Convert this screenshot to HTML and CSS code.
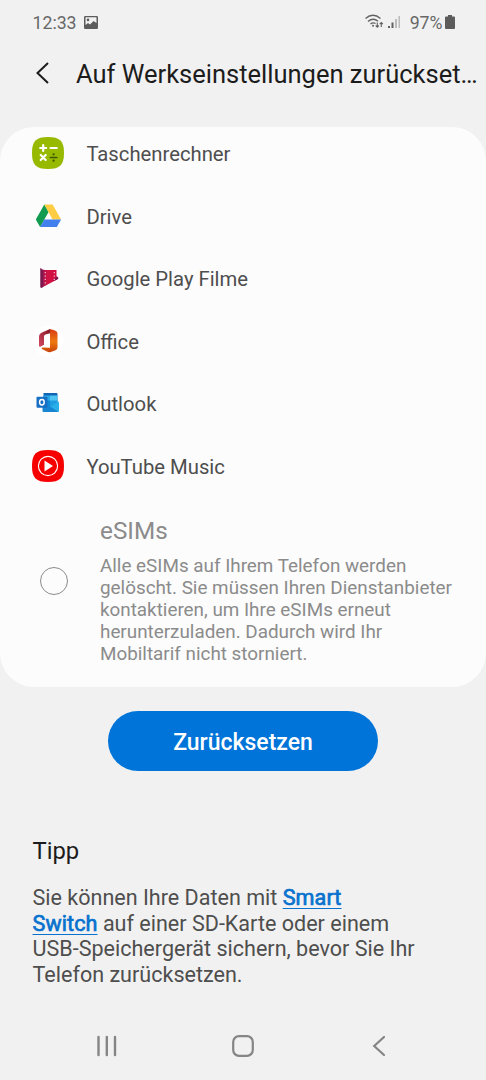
FILE: index.html
```html
<!DOCTYPE html>
<html lang="de">
<head>
<meta charset="utf-8">
<title>Auf Werkseinstellungen zurücksetzen</title>
<link rel="stylesheet" href="styles.css">
</head>
<body>
<div class="screen">
  <header class="status">
    <span class="clock">12:33</span>
    <svg class="picture" width="14" height="13" viewBox="0 0 14 13"><path fill="#5c5c5c" fill-rule="evenodd" d="M1.3 0h11.4Q14 0 14 1.3v10.4q0 1.3-1.3 1.3H1.3Q0 13 0 11.700V1.300Q0 0 1.300 0ZM1.500 1.300V9L4 7l2 1.500L9.500 5l3 2V1.300ZM4 2.600a1.300 1.300 0 1 1 0 2.600 1.300 1.300 0 0 1 0-2.600Z"/></svg>
    <svg class="wifi" width="20" height="16" viewBox="0 0 20 16" fill="none" stroke="#626262" stroke-width="1.400"><path d="M.5 4.500Q8-1.800 15.500 4.500M3 7.500Q8 3.200 13 7.200M5.500 10Q8 8 10.500 9.500"/><circle cx="8" cy="11.700" r="1" fill="#626262" stroke="none"/><path stroke-width="1.100" d="M12.300 8.500V13M10.700 11.500l1.600 1.600 1.600-1.600M16.300 13V8.800M14.700 10.200l1.600-1.600 1.600 1.600"/></svg>
    <svg class="signal" width="13" height="14" viewBox="0 0 13 14"><path fill="#626262" d="M0 11h2v2H0zM3.500 7.500h2V13h-2z"/><path fill="#bcbcbc" d="M7 4h2v9H7zM10.500 1h1.500v12h-1.500z"/></svg>
    <span class="percent">97%</span>
    <svg class="battery" width="10" height="14" viewBox="0 0 10 14"><path fill="#5c5c5c" d="M3 0h4v1.500h2q1 0 1 1V13q0 1-1 1H1q-1 0-1-1V2.500q0-1 1-1h2z"/></svg>
  </header>

  <div class="titlebar">
    <svg width="14" height="22" viewBox="0 0 14 22" fill="none" stroke="#1c1c1c" stroke-width="2"><path d="M13 1 2.500 11 13 21"/></svg>
    <h1>Auf Werkseinstellungen zurückset…</h1>
  </div>

  <main class="card">
    <ul class="apps">
      <li><svg class="icon" viewBox="0 0 32 32"><path fill="#97b900" d="M16 0C28 0 32 4 32 16S28 32 16 32 0 28 0 16 4 0 16 0Z"/><path stroke="#fff" stroke-width="2.200" stroke-linecap="round" d="M8.200 11h6M11.200 8v6M18.500 11h6.300M8.700 18l5 5M13.700 18l-5 5"/><path stroke="#3d5800" stroke-width="1.700" stroke-linecap="round" d="M18.500 20.500h6.300"/><g fill="#3d5800"><circle cx="21.600" cy="17.300" r="1.100"/><circle cx="21.600" cy="23.700" r="1.100"/></g></svg><span>Taschenrechner</span></li>
      <li><svg class="icon" viewBox="0 0 32 32"><path fill="#109b50" d="M12.300 4.500 16.600 12 8.100 27 3.800 19.500Z"/><path fill="#ffcd43" d="M12.300 4.500h8.300l8.500 15h-8.500Z"/><path fill="#4180ed" d="M12.300 19.500h16.800L24.800 27H8.100Z"/></svg><span>Drive</span></li>
      <li><svg class="icon" viewBox="0 0 32 32"><defs><linearGradient id="film"><stop offset="0" stop-color="#8d1750"/><stop offset=".4" stop-color="#d01345"/><stop offset="1" stop-color="#d3083f"/></linearGradient></defs><path fill="url(#film)" d="M8.500 6Q10 7.800 13 8h11.500v6.500q3 1 1 2.800L10 25.500q-1.500.8-1.500-1Z"/><path fill="#79194f" d="M8.500 6 11 8.500V25l-1.500.8q-1 .2-1-1ZM24.500 14.500q3 1 1 2.800l-4 2Z"/><path stroke="#f6bdcf" stroke-width="1.200" stroke-dasharray="1.300 2.100" d="M13.300 10v12M22.300 10v8"/></svg><span>Google Play Filme</span></li>
      <li><svg class="icon" viewBox="0 0 32 32"><defs><linearGradient id="officeRight" x2="0" y2="1"><stop stop-color="#d83b15"/><stop offset=".55" stop-color="#ee7b11"/><stop offset="1" stop-color="#c94107"/></linearGradient><linearGradient id="officeLeft" x1="1" x2="0" y2="1"><stop stop-color="#7e1520"/><stop offset="1" stop-color="#d64a65"/></linearGradient></defs><circle cx="16" cy="16" r="15.500" fill="#fff"/><path fill="url(#officeLeft)" d="m18 4-8 3.500Q7 8.800 7 12v8.500q0 2 1.800 1L12 19.800v-8.300q0-1.500 1.500-2L19 8Z"/><path fill="url(#officeRight)" d="m18 4 5 1.500q2.500.8 2.500 3v14q0 2.200-2.500 3l-5 1.800q-1.500.2-3-.8l-5-2.500q-1-1.200.5-1.400l7.500.2Z"/></svg><span>Office</span></li>
      <li><svg class="icon" viewBox="0 0 32 32"><path fill="#1066b5" d="M11.500 6h13q1 0 1 1v10h-14Z"/><path fill="#28a8e8" d="M11.500 8.500H18V14h-6.500Z"/><path fill="#51c5f2" d="M18 8.500h7.500V14H18Z"/><path fill="#1488d5" d="M11.500 13.500H18V20h-6.500Z"/><path fill="#209de1" d="M18 13.500h7.500V20H18Z"/><path fill="#2aafe9" d="m26.500 14.500-12.500 8V25h12q1 0 1-1v-8.700Z"/><path fill="#1785d2" d="m10.500 15 15.500 9.500q-.5.500-1.500.5h-13q-1 0-1-1Z"/><path fill="#176fc4" d="M5.500 9.700h9q1 0 1 1v9q0 1-1 1h-9q-1 0-1-1v-9q0-1 1-1Z"/><ellipse cx="9.900" cy="15.200" rx="2.300" ry="2.700" fill="none" stroke="#fff" stroke-width="1.500"/></svg><span>Outlook</span></li>
      <li><svg class="icon" viewBox="0 0 32 32"><path fill="#f60000" d="M16 0C28 0 32 4 32 16S28 32 16 32 0 28 0 16 4 0 16 0Z"/><circle cx="16" cy="16" r="9.600" fill="none" stroke="#fff" stroke-width="1.100"/><path fill="#fff" d="m12.500 10.500 8.500 5.500-8.500 5.500Z"/></svg><span>YouTube Music</span></li>
    </ul>
    <section class="esim">
      <span class="radio"></span>
      <div>
        <h2>eSIMs</h2>
        <p>Alle eSIMs auf Ihrem Telefon werden<br>gelöscht. Sie müssen Ihren Dienstanbieter<br>kontaktieren, um Ihre eSIMs erneut<br>herunterzuladen. Dadurch wird Ihr<br>Mobiltarif nicht storniert.</p>
      </div>
    </section>
  </main>

  <button class="reset">Zurücksetzen</button>

  <section class="tip">
    <h2>Tipp</h2>
    <p>Sie können Ihre Daten mit <a>Smart</a><br><a>Switch</a> auf einer SD-Karte oder einem<br>USB-Speichergerät sichern, bevor Sie Ihr<br>Telefon zurücksetzen.</p>
  </section>

  <nav class="navbar">
    <svg width="20" height="22" viewBox="0 0 20 22" stroke="#858585" stroke-width="2.400" stroke-linecap="round"><path d="M1.500 2v18M9.800 2v18M18 2v18"/></svg>
    <svg class="home" width="22" height="22" viewBox="0 0 22 22" fill="none" stroke="#858585" stroke-width="2.200"><rect x="1.200" y="1.200" width="19.600" height="19.600" rx="5.800"/></svg>
    <svg width="14" height="22" viewBox="0 0 14 22" fill="none" stroke="#858585" stroke-width="2.200" stroke-linecap="round"><path d="M12 2 2.200 11 12 20"/></svg>
  </nav>
</div>
</body>
</html>
```
FILE: styles.css
```css
* { box-sizing: border-box; }
body, h1, h2, p, ul { margin: 0; padding: 0; }
body { background: #f1f1f1; font-family: Roboto, sans-serif; color: #4e4e4e; }
h1, h2 { font-weight: 400; }
.screen { width: 486px; height: 1080px; display: flex; flex-direction: column; overflow: hidden; white-space: nowrap; }
.status { height: 44px; padding: 0 31px 0 32.500px; display: flex; align-items: center; color: #686868; font-size: 17.700px; }
.status span { padding-top: 1px; }
.status svg { flex: none; }
.picture { margin-left: 7px; }
.wifi { margin-left: auto; }
.signal { margin-left: 3px; }
.percent { margin-left: 9px; }
.battery { margin-left: 2.500px; }
.titlebar { height: 83px; padding: 18px 0 0 35px; display: flex; align-items: flex-start; color: #1c1c1c; }
.titlebar h1 { margin: -1px 0 0 27px; font-size: 25.500px; line-height: 26px; }
.card { height: 560px; background: #fcfcfc; border-radius: 34px; }
.apps { list-style: none; display: flex; flex-direction: column; gap: 30.600px; padding: 10px 0 0 32.400px; }
.apps li { height: 32px; display: flex; align-items: center; gap: 22px; font-size: 20.250px; }
.apps span { padding-top: 2px; }
.icon { width: 32px; height: 32px; }
.esim { display: flex; padding: 34px 0 0 39.500px; color: #8b8b8b; }
.radio { flex: none; width: 28px; height: 28px; margin: 51px 32.500px 0 0; border: 1.300px solid #8b8b8b; border-radius: 50%; }
.esim h2 { font-size: 24.300px; line-height: 30px; }
.esim p { margin-top: 9px; font-size: 18.850px; line-height: 22px; }
.reset { width: 270px; height: 60px; margin: 24px auto 0; padding: 3px 0 0; border: 0; border-radius: 30px; background: #0074d8; color: #fff; font: 500 23px Roboto, sans-serif; }
.tip { padding: 65px 32.500px 0; }
.tip h2 { color: #1c1c1c; font-size: 23.800px; line-height: 30px; }
.tip p { margin-top: 19px; font-size: 21.550px; line-height: 25.700px; }
.tip a { color: #0872ce; letter-spacing: .1px; -webkit-text-stroke: .7px #0872ce; text-decoration: underline; text-decoration-thickness: 1px; text-underline-offset: 3px; text-decoration-skip-ink: none; }
.navbar { height: 70px; margin-top: auto; padding: 2px 100px 0 97px; display: flex; justify-content: space-between; align-items: center; }
.home { margin-right: 4px; }
```
